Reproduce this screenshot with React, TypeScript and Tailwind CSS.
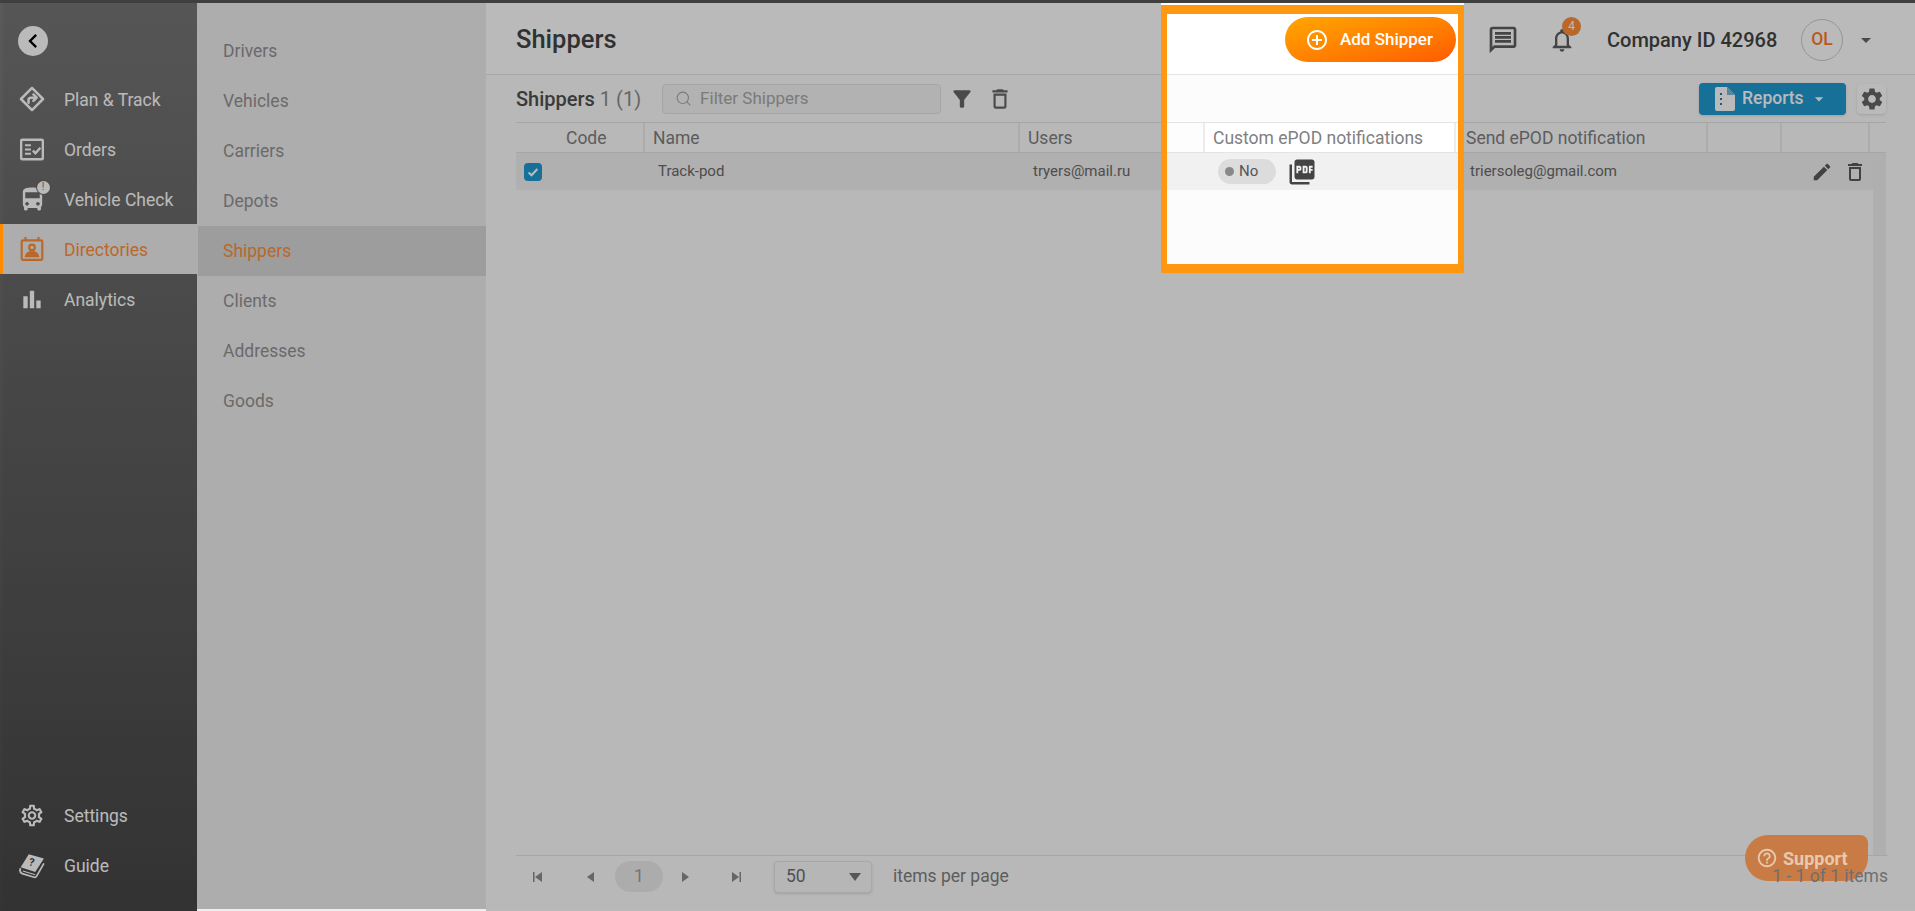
import type { ReactNode } from "react";
import { Search } from "lucide-react";
import {
  MdArrowDropDown,
  MdBarChart,
  MdChevronLeft,
  MdDirectionsBus,
  MdEdit,
  MdFilterAlt,
  MdHelpOutline,
  MdNotificationsNone,
  MdOutlineAddCircleOutline,
  MdOutlineDelete,
  MdOutlineMessage,
  MdOutlineSettings,
  MdPictureAsPdf,
  MdSettings,
} from "react-icons/md";

const COLS = "grid grid-cols-[129px_375px_185px_251px_252px_74px_88px]";

function PlanIcon() {
  return (
    <svg viewBox="0 0 24 24" className="h-[28px] w-[28px]" fill="none" stroke="currentColor" strokeWidth="2.300" strokeLinejoin="round" strokeLinecap="round">
      <path d="M12 1.800L22.200 12 12 22.200 1.800 12z" />
      <path d="M8.800 15.500v-2.500a2.200 2.200 0 0 1 2.200-2.200h4.500" />
      <path d="M13.300 7.800l3 3-3 3" />
    </svg>
  );
}

function OrdersIcon() {
  return (
    <svg viewBox="0 0 24 24" className="h-[27px] w-[27px]" fill="none" stroke="currentColor" strokeWidth="2.200">
      <rect x="2" y="3" width="20" height="18" rx="1" />
      <path d="M5.500 8h5.500M5.500 12h5.500M5.500 16h5.500" strokeWidth="1.800" />
      <path d="M12.800 13l2.400 2.400 4.500-5" strokeWidth="2.200" />
    </svg>
  );
}

function DirectoryIcon() {
  return (
    <svg viewBox="0 0 24 24" className="h-[26px] w-[26px]" fill="none" stroke="currentColor" strokeWidth="2">
      <rect x="2.5" y="4" width="19" height="18" rx="1" />
      <path d="M6 1v3M18 1v3" />
      <circle cx="12" cy="10.5" r="2.6" />
      <path d="M6.5 18.500c.6-2.600 2.800-3.600 5.500-3.600s4.900 1 5.500 3.600z" fill="currentColor" />
    </svg>
  );
}

function GuideIcon() {
  return (
    <svg viewBox="0 0 24 24" className="h-[28px] w-[28px]" fill="currentColor">
      <path d="M9 2l14 4-8 12.500L1.500 14z" />
      <path d="M1.500 15c-1 2-.5 4 1.500 5l11 3.300c1 .3 1.800-.2 2.300-1L23 10.500" fill="none" stroke="currentColor" strokeWidth="1.600" />
      <path d="M3.500 17.500l11.500 3.500" fill="none" stroke="currentColor" strokeWidth="1" />
      <text x="9" y="13" fontSize="10" fontWeight="700" fill="#3f3f3f" fontFamily="Roboto, sans-serif" transform="rotate(12 12 10)">?</text>
    </svg>
  );
}

function ReportIcon() {
  return (
    <svg viewBox="0 0 20 24" className="h-[24px] w-[20px]" fill="currentColor">
      <path d="M2 0h10l8 8v14a2 2 0 0 1-2 2H2a2 2 0 0 1-2-2V2a2 2 0 0 1 2-2z" />
      <path d="M12 0v8h8z" fill="#7fb8d0" />
      <path d="M5 6h2v2H5zM5 11h2v2H5zM5 16h2v2H5z" fill="#1a82ad" />
    </svg>
  );
}

function PagerIcon({ dir, bar }: { dir: "left" | "right"; bar?: boolean }) {
  return (
    <svg viewBox="0 0 12 12" className="h-[12px] w-[12px]" fill="#8c8c8c">
      {dir === "left" ? <path d="M10 1v10L3 6z" /> : <path d="M2 1v10l7-5z" />}
      {bar && (dir === "left" ? <rect x="1" y="1" width="1.500" height="10" /> : <rect x="9.500" y="1" width="1.500" height="10" />)}
    </svg>
  );
}

function SideItem({ icon, label, active }: { icon: ReactNode; label: string; active?: boolean }) {
  return (
    <div className={`flex h-[50px] items-center gap-[19px] pl-[16px] text-[17.5px] ${active ? "bg-[#eeeeee] text-[#ff8f3a]" : "text-white"}`}>
      <span className="flex w-[26px] items-center justify-center">{icon}</span>
      <span className="pt-[2px]">{label}</span>
    </div>
  );
}

function SubItem({ label, active }: { label: string; active?: boolean }) {
  return (
    <div className={`ml-px flex h-[50px] items-center pl-[25px] text-[17.5px] ${active ? "bg-[#d7d7d7] text-[#ff8f3a]" : "text-[#929292]"}`}>
      {label}
    </div>
  );
}

function HeaderCell({ children, className = "" }: { children?: ReactNode; className?: string }) {
  return <div className={`flex items-center whitespace-nowrap border-r-2 border-[#ececec] pl-2 pt-[1px] ${className}`}>{children}</div>;
}

export default function App() {
  return (
    <div className="relative flex h-[911px] w-[1915px] flex-col overflow-hidden bg-white font-['Roboto',sans-serif]">
      <div className="h-[3px] bg-[#3f3f3f]" />
      <div className="flex min-h-0 flex-1">
        {/* left edge of the capture, the dim layer does not reach it */}
        <div className="flex w-[3px] flex-col bg-gradient-to-b from-[#5a5a5a] to-[#343434]">
          <div className="h-[221px]" />
          <div className="h-[50px] bg-[#ff8a00]" />
        </div>

        <nav className="flex w-[194px] flex-col border-b-2 border-[#333] bg-gradient-to-b from-[#767676] to-[#464646] pb-[19px] pt-[23px]">
          <div className="mb-[18px] ml-[15px] flex h-[30px] w-[30px] items-center justify-center rounded-full bg-[#ffffff] text-black">
            <MdChevronLeft size={28} />
          </div>
          <SideItem icon={<PlanIcon />} label="Plan & Track" />
          <SideItem icon={<OrdersIcon />} label="Orders" />
          <SideItem
            icon={
              <span className="relative flex">
                <MdDirectionsBus size={29} />
                <span className="absolute -right-[3px] -top-[4px] flex h-[13px] w-[13px] items-center justify-center rounded-full bg-white text-[10px] leading-none text-[#777] ring-1 ring-[#636363]">!</span>
              </span>
            }
            label="Vehicle Check"
          />
          <SideItem icon={<DirectoryIcon />} label="Directories" active />
          <SideItem icon={<MdBarChart size={33} />} label="Analytics" />
          <div className="mt-auto">
            <SideItem icon={<MdOutlineSettings size={29} />} label="Settings" />
            <SideItem icon={<GuideIcon />} label="Guide" />
          </div>
        </nav>

        <aside className="w-[289px] bg-[#eeeeee] pt-[23px]">
          {["Drivers", "Vehicles", "Carriers", "Depots"].map((s) => <SubItem key={s} label={s} />)}
          <SubItem label="Shippers" active />
          {["Clients", "Addresses", "Goods"].map((s) => <SubItem key={s} label={s} />)}
        </aside>

        <main className="flex min-w-0 flex-1 flex-col border-b-2 border-[#b9b9b9] bg-[#fcfcfc]">
          <header className="flex h-[72px] items-center whitespace-nowrap border-b border-[#e6e6e6] bg-white pl-[30px] pr-[37px] pt-[2px]">
            <h1 className="text-[25.5px] font-medium text-[#444]">Shippers</h1>
            <button className="ml-auto flex h-[45px] w-[171px] shrink-0 items-center rounded-full bg-gradient-to-br from-[#ffa600] to-[#ff5a00] pl-[20px] text-[17px] font-medium text-white">
              <MdOutlineAddCircleOutline size={24} />
              <span className="ml-[11px]">Add Shipper</span>
            </button>
            <MdOutlineMessage size={32} className="ml-[31px] shrink-0 text-[#5e5e5e]" />
            <span className="relative ml-[29px] flex shrink-0">
              <MdNotificationsNone size={28} className="text-[#5e5e5e]" />
              <span className="absolute -right-[5px] -top-[9px] flex h-[19px] w-[19px] items-center justify-center rounded-full bg-[#ff8f3a] text-[12px] text-white">4</span>
            </span>
            <span className="ml-[31px] w-[172px] shrink-0 text-[20px] font-medium text-[#444]">Company ID 42968</span>
            <span className="ml-[22px] flex h-[42px] w-[42px] shrink-0 items-center justify-center rounded-full border border-[#ccc] text-[17.5px] font-medium text-[#ff7a2a]">OL</span>
            <MdArrowDropDown size={24} className="ml-[11px] shrink-0 text-[#666]" />
          </header>

          <div className="flex h-[47px] items-center pl-[30px] pr-[29px]">
            <span className="whitespace-nowrap text-[20px] font-medium text-[#505050]">
              Shippers <span className="font-normal text-[#8c8c8c]">1 (1)</span>
            </span>
            <label className="ml-[21px] flex h-[30px] w-[279px] items-center rounded border border-[#e2e2e2] bg-[#f4f4f4] pl-[12px] text-[17px] text-[#a8a8a8]">
              <Search size={17} strokeWidth={1.500} />
              <span className="ml-[8px]">Filter Shippers</span>
            </label>
            <MdFilterAlt size={26} className="ml-[8px] text-[#666]" />
            <MdOutlineDelete size={26} className="ml-[12px] text-[#666]" />
            <button className="ml-auto flex h-[32px] w-[147px] items-center rounded bg-[#1f9ad0] pl-[16px] text-[17.5px] font-medium text-white shadow">
              <ReportIcon />
              <span className="ml-[7px]">Reports</span>
              <MdArrowDropDown size={20} className="ml-[5px]" />
            </button>
            <span className="ml-[11px] flex h-[30px] w-[29px] items-center justify-center rounded bg-white shadow-sm">
              <MdSettings size={26} className="text-[#666]" />
            </span>
          </div>

          <div className="ml-[30px] mr-[29px] flex min-h-0 flex-1 flex-col">
            <div className={`${COLS} h-[31px] border-y border-[#e4e4e4] bg-[#fdfdfd] text-[17.5px] text-[#808080]`}>
              <HeaderCell className="pl-[50px]">Code</HeaderCell>
              <HeaderCell>Name</HeaderCell>
              <HeaderCell>Users</HeaderCell>
              <HeaderCell className="bg-white">Custom ePOD notifications</HeaderCell>
              <HeaderCell className="pl-[10px]">Send ePOD notification</HeaderCell>
              <HeaderCell />
              <HeaderCell />
            </div>
            <div className="flex min-h-0 flex-1">
              <div className="flex-1">
                <div className={`${COLS} h-[37px] items-center bg-[#f1f1f1] text-[15px] text-[#6a6a6a]`}>
                  <div className="pl-[8px]">
                    <span className="flex h-[18px] w-[18px] items-center justify-center rounded bg-[#1f9ad0] text-white">
                      <svg viewBox="0 0 16 16" className="h-[14px] w-[14px]" fill="none" stroke="currentColor" strokeWidth="2.400"><path d="M3 8.500l3.300 3.200L13 4.500" /></svg>
                    </span>
                  </div>
                  <div className="pl-[13px]">Track-pod</div>
                  <div className="pl-[13px]">tryers@mail.ru</div>
                  <div className="flex items-center pl-[13px]">
                    <span className="flex h-[25px] w-[58px] items-center rounded-full bg-[#dcdcdc] pl-[7px] text-[15px] text-[#555]">
                      <span className="mr-[5px] h-[9px] w-[9px] rounded-full bg-[#888]" />
                      No
                    </span>
                    <MdPictureAsPdf size={30} className="ml-[11px] text-[#444]" />
                  </div>
                  <div className="pl-[14px]">triersoleg@gmail.com</div>
                  <div />
                  <div className="flex items-center gap-[10px] pl-[29px] text-[#5a5a5a]">
                    <MdEdit size={22} />
                    <MdOutlineDelete size={24} />
                  </div>
                </div>
              </div>
              <div className="w-[13px] bg-[#f0f0f0]" />
            </div>
          </div>

          <footer className="ml-[30px] mr-[27px] flex h-[54px] items-center border-t border-[#e4e4e4] pb-[12px] text-[17.5px] text-[#808080]">
            <span className="ml-[16px]"><PagerIcon dir="left" bar /></span>
            <span className="ml-[40px]"><PagerIcon dir="left" /></span>
            <span className="ml-[19px] flex h-[31px] w-[48px] items-center justify-center rounded-full bg-[#ececec] text-[#a0a0a0]">1</span>
            <span className="ml-[17px]"><PagerIcon dir="right" /></span>
            <span className="ml-[38px]"><PagerIcon dir="right" bar /></span>
            <span className="ml-[32px] flex h-[32px] w-[98px] items-center justify-between rounded border border-[#e6e6e6] bg-[#fafafa] pl-[11px] pr-[10px] text-[#707070] shadow-sm">
              50
              <svg viewBox="0 0 12 8" className="h-[8px] w-[12px]" fill="#777"><path d="M0 0h12L6 8z" /></svg>
            </span>
            <span className="ml-[21px]">items per page</span>
            <span className="relative z-30 ml-auto text-[#6f6f6f]">1 - 1 of 1 items</span>
          </footer>
        </main>
      </div>

      {/* dim layer, cut out around the highlighted area */}
      <div className="pointer-events-none absolute bottom-[2px] left-[3px] right-0 top-[3px] z-10 overflow-hidden">
        <div className="absolute left-[1158px] top-0 h-[270px] w-[303px] pt-[2px] shadow-[0_0_0_3000px_rgba(0,0,0,0.27)]">
          <div className="h-full border-x-[6px] border-y-[9px] border-[#ff9810]" />
        </div>
      </div>

      <div className="absolute left-[1745px] top-[835px] z-20 flex h-[46px] w-[123px] items-center rounded-bl-[23px] rounded-br-[23px] rounded-tl-[23px] rounded-tr-[8px] bg-[#c97b45] pl-[11px] text-[18px] font-bold text-[#e6c9ae]">
        <MdHelpOutline size={22} />
        <span className="ml-[5px]">Support</span>
      </div>
    </div>
  );
}
